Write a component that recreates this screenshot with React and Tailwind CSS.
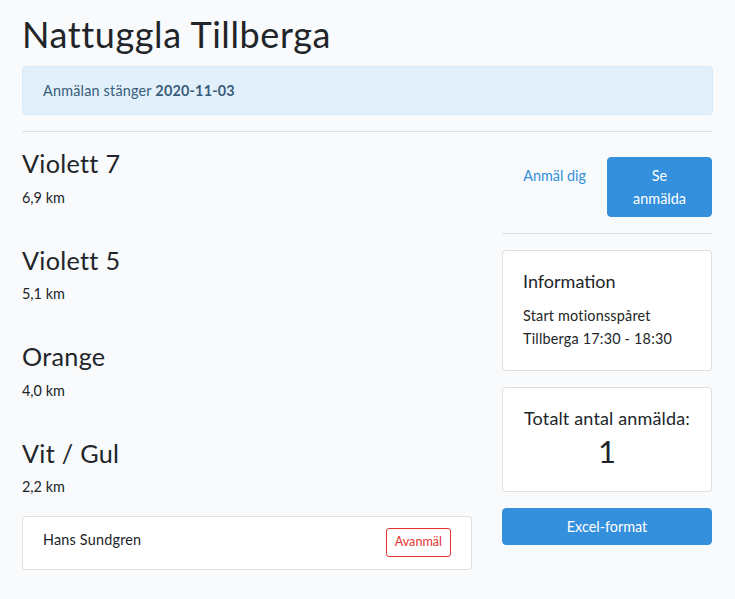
import React from 'react'

const courses = [
  { name: 'Violett 7', length: '6,9 km', people: [] },
  { name: 'Violett 5', length: '5,1 km', people: [] },
  { name: 'Orange', length: '4,0 km', people: [] },
  { name: 'Vit / Gul', length: '2,2 km', people: ['Hans Sundgren'] },
]

export default function App() {
  return (
    <div className="min-h-[599px] bg-[#f8fafc] text-[#212529] text-[14.4px] leading-[1.6]" style={{ fontFamily: 'Lato, "Open Sans", sans-serif' }}>
      <div className="px-[22px] pt-[13px]">
        <h1 className="text-[36px] leading-[1.2] mb-[10px] tracking-[0.6px]">Nattuggla Tillberga</h1>
        <div className="rounded-[4px] border border-[#d6e9f9] bg-[#e2f0fb] px-5 py-3 text-[#385d7a] tracking-[0.2px]">
          Anmälan stänger <b className="font-bold">2020-11-03</b>
        </div>
        <hr className="mt-4 mb-4 border-t border-[#dfe1e3]" />

        <div className="flex gap-[30px]">
          <div className="w-[450px]">
            {courses.map((c, i) => (
              <div key={i} className={c.people.length ? '' : 'pb-[20px]'}>
                <h3 className="text-[25.2px] leading-[1.2] mb-[7.2px] tracking-[0.3px]">{c.name}</h3>
                <p className={c.people.length ? 'mb-[18px]' : 'mb-4'}>{c.length}</p>
                {c.people.map((p, j) => (
                  <div key={j} className="flex items-start justify-between rounded-[4px] border border-[rgba(0,0,0,0.125)] bg-white px-5 pt-[11px] pb-[12px]">
                    <span className="tracking-[0.2px]">{p}</span>
                    <button className="rounded-[3px] border border-[#e3342f] px-2 py-1 text-[12.6px] leading-[1.5] text-[#e3342f]">Avanmäl</button>
                  </div>
                ))}
              </div>
            ))}
          </div>

          <div className="w-[210px]">
            <div className="mt-[9px] flex items-start justify-end gap-2">
              <a className="border border-transparent px-3 py-[6px] text-[#3490dc]">Anmäl dig</a>
              <button className="w-[105px] rounded-[4px] border border-[#3490dc] bg-[#3490dc] px-6 py-[6px] text-white leading-[1.6]">Se anmälda</button>
            </div>
            <hr className="mt-4 mb-4 border-t border-[#dfe1e3]" />
            <div className="rounded-[4px] border border-[rgba(0,0,0,0.125)] bg-white p-5">
              <h5 className="text-[18px] leading-[1.2] mb-[10.8px]">Information</h5>
              <p className="tracking-[0.2px]">Start motionsspåret<br />Tillberga 17:30 - 18:30</p>
            </div>
            <div className="mt-4 rounded-[4px] border border-[rgba(0,0,0,0.125)] bg-white px-5 pt-5 pb-[20px] text-center">
              <h5 className="whitespace-nowrap text-[18px] leading-[1.2] mb-[4px] tracking-[0.15px]">Totalt antal anmälda:</h5>
              <div className="text-[31px] leading-[1.2]">1</div>
            </div>
            <button className="mt-4 w-full rounded-[4px] border border-[#3490dc] bg-[#3490dc] px-3 py-[6px] text-white leading-[1.6]">Excel-format</button>
          </div>
        </div>
      </div>
    </div>
  )
}
